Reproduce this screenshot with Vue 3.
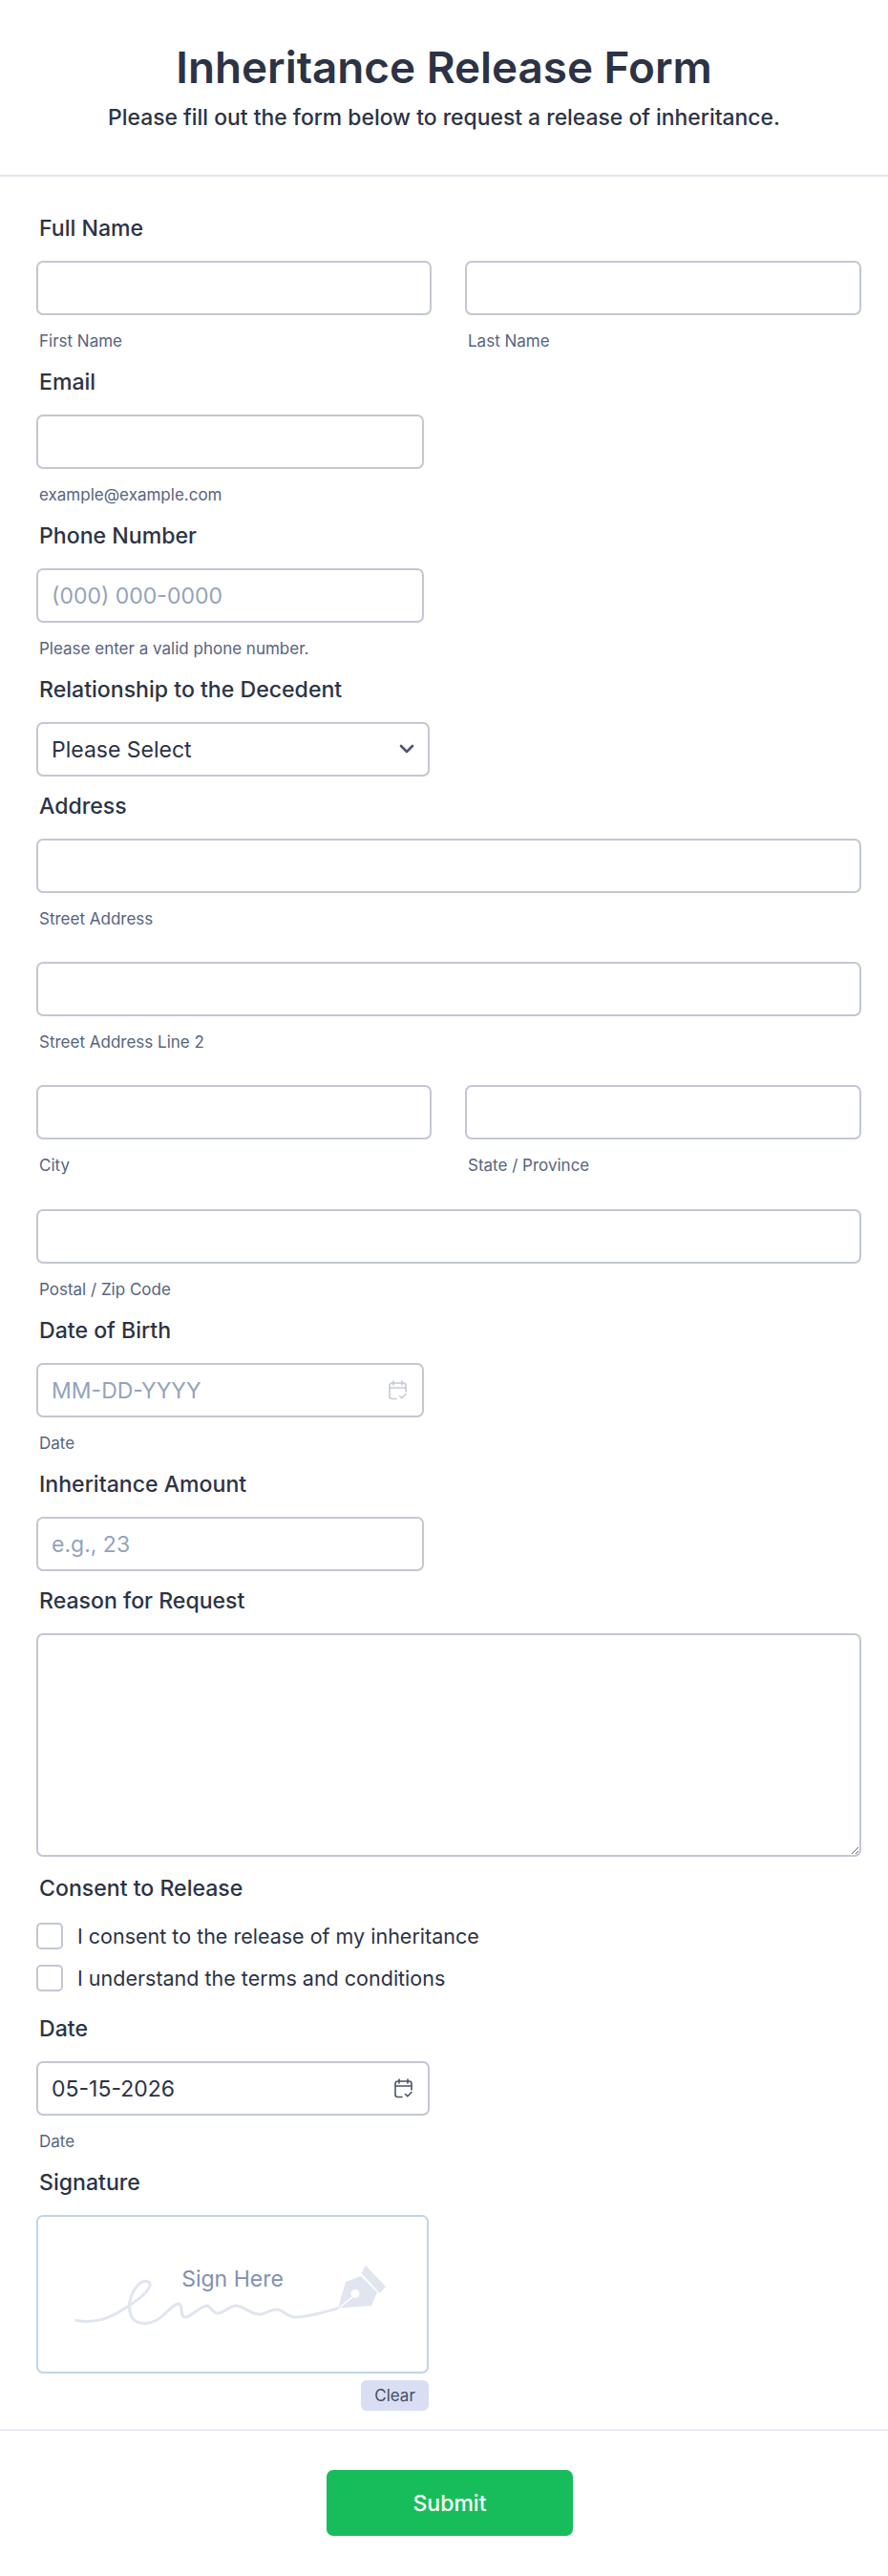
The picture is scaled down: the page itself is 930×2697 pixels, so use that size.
<template>
  <div class="page">
    <header class="form-header">
      <h1>Inheritance Release Form</h1>
      <p>Please fill out the form below to request a release of inheritance.</p>
    </header>

    <form class="form-body" @submit.prevent>
      <div class="field">
        <label class="label">Full Name</label>
        <div class="two-col">
          <div>
            <input class="input" type="text" />
            <span class="sub">First Name</span>
          </div>
          <div>
            <input class="input" type="text" />
            <span class="sub">Last Name</span>
          </div>
        </div>
      </div>

      <div class="field">
        <label class="label">Email</label>
        <input class="input narrow" type="email" />
        <span class="sub">example@example.com</span>
      </div>

      <div class="field">
        <label class="label">Phone Number</label>
        <input class="input narrow" type="tel" placeholder="(000) 000-0000" />
        <span class="sub">Please enter a valid phone number.</span>
      </div>

      <div class="field">
        <label class="label">Relationship to the Decedent</label>
        <div class="control wide">
          <select class="input select">
            <option>Please Select</option>
          </select>
          <svg class="chevron" viewBox="0 0 16 10" fill="none">
            <path d="M2 2l6 6 6-6" stroke="#4a5673" stroke-width="2.6" stroke-linecap="round" stroke-linejoin="round" />
          </svg>
        </div>
      </div>

      <div class="field">
        <label class="label">Address</label>
        <div class="address-row">
          <input class="input" type="text" />
          <span class="sub">Street Address</span>
        </div>
        <div class="address-row">
          <input class="input" type="text" />
          <span class="sub">Street Address Line 2</span>
        </div>
        <div class="two-col address-row city-row">
          <div>
            <input class="input" type="text" />
            <span class="sub">City</span>
          </div>
          <div>
            <input class="input" type="text" />
            <span class="sub">State / Province</span>
          </div>
        </div>
        <input class="input" type="text" />
        <span class="sub">Postal / Zip Code</span>
      </div>

      <div class="field">
        <label class="label">Date of Birth</label>
        <div class="control narrow">
          <input class="input" type="text" placeholder="MM-DD-YYYY" />
          <svg class="cal" viewBox="0 0 21 21" fill="none" stroke="#c5cad6" stroke-width="1.6" stroke-linecap="round" stroke-linejoin="round">
            <path d="M6 1v4M15 1v4M2 8h17M9 19.5H4.5A2.5 2.5 0 0 1 2 17V5.5A2.5 2.5 0 0 1 4.5 3h12A2.5 2.5 0 0 1 19 5.5V12M12.5 16.5l2.3 2.3 4.2-4.3" />
          </svg>
        </div>
        <span class="sub">Date</span>
      </div>

      <div class="field">
        <label class="label">Inheritance Amount</label>
        <input class="input narrow" type="text" placeholder="e.g., 23" />
      </div>

      <div class="field">
        <label class="label">Reason for Request</label>
        <textarea class="input textarea"></textarea>
      </div>

      <div class="field consent">
        <label class="label">Consent to Release</label>
        <div class="checks">
          <label v-for="item in consents" :key="item" class="check">
            <input type="checkbox" />
            <span>{{ item }}</span>
          </label>
        </div>
      </div>

      <div class="field">
        <label class="label">Date</label>
        <div class="control wide">
          <input class="input" type="text" value="05-15-2026" />
          <svg class="cal dark" viewBox="0 0 21 21" fill="none" stroke="#4a5368" stroke-width="1.6" stroke-linecap="round" stroke-linejoin="round">
            <path d="M6 1v4M15 1v4M2 8h17M9 19.5H4.5A2.5 2.5 0 0 1 2 17V5.5A2.5 2.5 0 0 1 4.5 3h12A2.5 2.5 0 0 1 19 5.5V12M12.5 16.5l2.3 2.3 4.2-4.3" />
          </svg>
        </div>
        <span class="sub">Date</span>
      </div>

      <div class="field signature">
        <label class="label">Signature</label>
        <div class="sign-box">
          <svg class="sign-art" viewBox="0 0 360 110" fill="none">
            <path d="M20 78.5C35 81 50 78 62 71C78 62 95 50 97 42C98 36 90 36 85 41C77 49 73 62 77 73C82 85 100 84 112 72C118 66 124 60 128 61C132 64 128 75 134 75C141 75 149 63 157 63C161 64 163 71 168 71C174 71 180 63 187 63C195 63 204 73 213 72C220 71 224 66 231 67C237 68 241 75 249 75C262 75 278 70 293 66" stroke="#e1e5f0" stroke-width="3" stroke-linecap="round" />
            <path d="M294 65.5L302 38L318 32L335 49L329 63Z" fill="#e1e5f0" />
            <path d="M318.5 29L323 21L344 43L337.5 50Z" fill="#e1e5f0" />
            <path d="M296 64.5L309 54" stroke="#fff" stroke-width="1.6" />
            <circle cx="312" cy="50.5" r="4.5" fill="#fff" />
          </svg>
          <span class="sign-text">Sign Here</span>
        </div>
        <div class="sign-actions">
          <button type="button" class="clear">Clear</button>
        </div>
      </div>
    </form>

    <footer class="form-footer">
      <button type="button" class="submit">Submit</button>
    </footer>
  </div>
</template>

<script setup>
const consents = [
  'I consent to the release of my inheritance',
  'I understand the terms and conditions',
]
</script>

<style scoped>
.page {
  width: 930px;
  height: 2697px;
  background: #fff;
  color: #2c3345;
  font-family: Inter, "Liberation Sans", sans-serif;
}

/* Header */
.form-header {
  height: 183px;
  padding-top: 41px;
  box-sizing: border-box;
  text-align: center;
}
.form-header h1 {
  margin: 0;
  font-size: 45.8px;
  line-height: 60px;
  font-weight: 600;
}
.form-header p {
  margin: 6px 0 0;
  font-size: 22.9px;
  line-height: 32px;
  font-weight: 500;
}

/* Form */
.form-body {
  border-top: 2px solid #e3e5f0;
  padding: 37px 28px 0 38px;
}
.field {
  padding-bottom: 14px;
}
.label {
  display: block;
  height: 34px;
  line-height: 35px;
  margin: 0 0 17px 3px;
  font-size: 23.1px;
  font-weight: 500;
}
.sub {
  display: block;
  height: 20px;
  line-height: 21px;
  margin: 17px 0 2px 3px;
  font-size: 17px;
  color: #57647e;
}
.two-col {
  display: grid;
  grid-template-columns: 414px 415px;
  gap: 35px;
}
.address-row {
  padding-bottom: 33px;
}
.city-row {
  padding-bottom: 34px;
}

.input {
  display: block;
  width: 100%;
  height: 57px;
  box-sizing: border-box;
  padding: 0 14px;
  background: #fff;
  border: 2px solid #c3c7d4;
  border-radius: 7px;
  outline: none;
  font: 400 23px Inter, "Liberation Sans", sans-serif;
  color: #2c3345;
}
.input::placeholder {
  color: #94a3bb;
  opacity: 1;
}
.narrow {
  width: 406px;
}
.wide {
  width: 412px;
}
.control {
  position: relative;
}
.select {
  appearance: none;
  -webkit-appearance: none;
}
.chevron {
  position: absolute;
  right: 16px;
  top: 23px;
  width: 16px;
  height: 10px;
  pointer-events: none;
}
.cal {
  position: absolute;
  right: 17px;
  top: 18px;
  width: 21px;
  height: 21px;
  pointer-events: none;
}
.textarea {
  height: 234px;
  padding: 12px 14px;
}

/* Checkboxes */
.consent {
  padding-top: 2px;
  padding-bottom: 22px;
}
.consent .label {
  margin-bottom: 19px;
}
.checks {
  display: flex;
  flex-direction: column;
  gap: 16px;
}
.check {
  display: flex;
  align-items: center;
  gap: 15px;
  font-size: 21.5px;
  line-height: 28px;
}
.check input {
  appearance: none;
  -webkit-appearance: none;
  flex: none;
  width: 28px;
  height: 28px;
  margin: 0;
  background: #fff;
  border: 2px solid #c3c7d4;
  border-radius: 5px;
}

/* Signature */
.sign-box {
  position: relative;
  width: 411px;
  height: 166px;
  box-sizing: border-box;
  border: 2px solid #c1d4ea;
  border-radius: 7px;
  background: #fff;
}
.sign-art {
  position: absolute;
  left: 20px;
  top: 30px;
  width: 360px;
  height: 110px;
}
.sign-text {
  position: absolute;
  left: 0;
  right: 0;
  top: 48px;
  text-align: center;
  font-size: 23px;
  line-height: 34px;
  color: #8391b0;
}
.sign-actions {
  width: 411px;
  display: flex;
  justify-content: flex-end;
  margin-top: 7px;
}
.clear {
  width: 71px;
  height: 32px;
  padding: 0;
  border: 0;
  border-radius: 6px;
  background: #dadef3;
  color: #434d68;
  font: 400 17px Inter, "Liberation Sans", sans-serif;
}
.signature {
  padding-bottom: 0;
}

/* Footer */
.form-footer {
  margin-top: 19px;
  padding: 41px 0 0 12px;
  border-top: 2px solid #e8eaf4;
  display: flex;
  justify-content: center;
}
.submit {
  width: 258px;
  height: 69px;
  border: 0;
  border-radius: 7px;
  background: #18bd5b;
  color: #fff;
  font: 500 23px Inter, "Liberation Sans", sans-serif;
}
</style>

<style>
html, body {
  margin: 0;
  background: #fff;
}
</style>
